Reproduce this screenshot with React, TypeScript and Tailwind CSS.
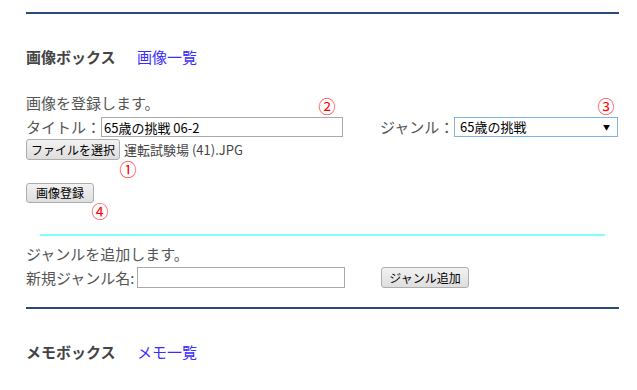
import React from "react";

const NAVY_RULE = "h-[2px] bg-[#2c4a78]";

function Circled({ n, className }: { n: string; className: string }) {
  return (
    <span
      className={`absolute flex h-[16px] w-[16px] items-center justify-center text-[17px] leading-none text-[#ff0000] ${className}`}
    >
      {n}
    </span>
  );
}

function WinButton({ label, className = "" }: { label: string; className?: string }) {
  return (
    <button
      type="button"
      className={`flex items-center justify-center whitespace-nowrap rounded-[3px] border border-[#adadad] bg-gradient-to-b from-[#f2f2f2] to-[#dedede] px-0 text-[12px] leading-none text-black ${className}`}
    >
      {label}
    </button>
  );
}

function BoxHeading({ title, link }: { title: string; link: string }) {
  return (
    <div className="flex h-[20px] items-center leading-[20px]">
      <span className="w-[111px] text-[15px] font-bold text-[#444]">{title}</span>
      <a href="#" className="text-[15px] text-[#3a2cff]">
        {link}
      </a>
    </div>
  );
}

export default function App() {
  return (
    <div
      className="relative w-[637px] bg-white pl-[26px] pr-[18px] pt-[12px] text-[15px] text-[#555]"
      style={{ fontFamily: '"Noto Sans CJK JP", "Noto Sans", sans-serif' }}
    >
      <div className={NAVY_RULE} />

      <div className="mt-[33px]">
        <BoxHeading title="画像ボックス" link="画像一覧" />
      </div>

      <p className="mt-[26px] h-[20px] leading-[20px]">画像を登録します。</p>

      <div className="mt-[4px] flex h-[20px] items-center">
        <span className="w-[75px] shrink-0 whitespace-nowrap leading-[20px]">タイトル：</span>
        <input
          type="text"
          defaultValue="65歳の挑戦 06-2"
          className="h-[20px] w-[242px] shrink-0 border border-[#a9a9a9] px-[2px] text-[13px] text-black outline-none"
        />
        <span className="ml-[37px] w-[74px] shrink-0 whitespace-nowrap leading-[20px]">ジャンル：</span>
        <div className="flex h-[20px] w-[164px] shrink-0 items-center justify-between border border-[#7eb4ea] pl-[5px] pr-[7px] text-[13px] text-black">
          <span>65歳の挑戦</span>
          <span className="text-[7px]">▼</span>
        </div>
      </div>

      <div className="mt-[2px] flex h-[21px] items-center">
        <WinButton label="ファイルを選択" className="h-[21px] w-[94px]" />
        <span className="ml-[4px] text-[13px] leading-[18px] text-[#444]">運転試験場 (41).JPG</span>
      </div>

      <WinButton label="画像登録" className="mt-[23px] h-[20px] w-[68px]" />

      <div className="ml-[14px] mr-[14px] mt-[31px] h-[2px] bg-[#80ffff]" />

      <p className="mt-[8px] h-[20px] leading-[20px]">ジャンルを追加します。</p>

      <div className="mt-[3px] flex h-[21px] items-center">
        <span className="w-[111px] shrink-0 whitespace-nowrap leading-[20px]">新規ジャンル名:</span>
        <input
          type="text"
          className="h-[21px] w-[208px] shrink-0 border border-[#a9a9a9] outline-none"
        />
        <WinButton label="ジャンル追加" className="ml-[36px] h-[21px] w-[88px]" />
      </div>

      <div className={`mt-[19px] ${NAVY_RULE}`} />

      <div className="mt-[33px] pb-[27px]">
        <BoxHeading title="メモボックス" link="メモ一覧" />
      </div>

      <Circled n="②" className="left-[319px] top-[97px]" />
      <Circled n="③" className="left-[598px] top-[97px]" />
      <Circled n="①" className="left-[120px] top-[160px]" />
      <Circled n="④" className="left-[92px] top-[202px]" />
    </div>
  );
}
